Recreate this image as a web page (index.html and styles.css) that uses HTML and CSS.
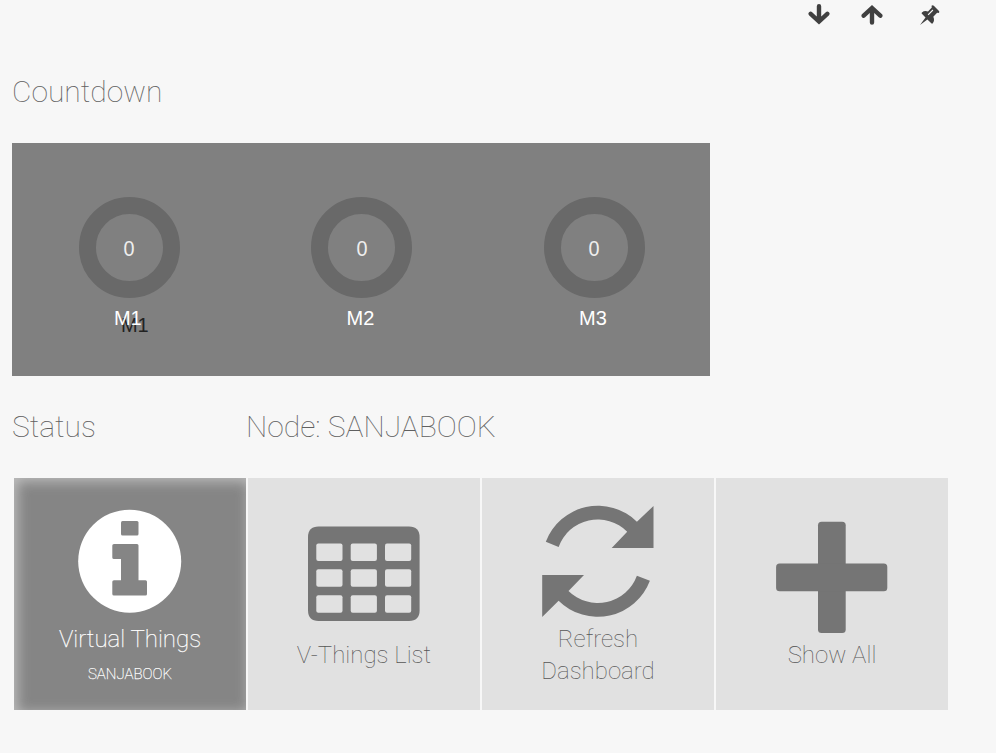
FILE: index.html
```html
<!DOCTYPE html>
<html lang="en">
<head>
<meta charset="utf-8">
<title>Dashboard</title>
<link rel="stylesheet" href="styles.css">
</head>
<body>
<nav class="toolbar">
  <svg class="tool" viewBox="0 0 22 22"><path d="M11 2.200V16M2.700 9.800L11 17.500l8.300-7.700"/></svg>
  <svg class="tool tool-up" viewBox="0 0 22 22"><path d="M11 18.600V5M2.700 11.700L11 4l8.300 7.700"/></svg>
  <svg class="tool tool-pin" viewBox="0 0 22 22"><path class="solid" fill-rule="evenodd" d="M12.500 1.800Q13.700 .7 14.800 1.800L20 7Q20.900 8.200 19.700 8.900L18.100 8.700L14.300 12.700Q16 16.300 13.800 19.300Q13 20 12.300 19.300L8.400 15.400L1 21L6.500 13.400L2.900 9.800Q2.200 9.100 2.900 8.400Q5.500 6.400 9 7.500L12.800 3.500ZM9.500 11.200L14.300 6.400L13.500 5.600L8.700 10.400Z"/></svg>
</nav>
<main>
  <h2 class="heading">Countdown</h2>
  <section class="timers">
    <div class="timer"><div class="ring"><span class="count">0</span></div><div class="name">M1<span class="ghost">M1</span></div></div>
    <div class="timer"><div class="ring"><span class="count">0</span></div><div class="name">M2</div></div>
    <div class="timer"><div class="ring"><span class="count">0</span></div><div class="name">M3</div></div>
  </section>
  <div class="headings">
    <h2 class="heading">Status</h2>
    <h2 class="heading">Node: SANJABOOK</h2>
  </div>
  <section class="tiles">
    <div class="tile active">
      <svg class="icon info" viewBox="78 509 104 104"><circle cx="129.700" cy="561.200" r="51.500"/><rect class="cut" x="121" y="521" width="17.500" height="14.500" rx="1.500"/><path class="cut" d="M114 544H137Q138.500 544 138.500 545.500V580.300H145.500Q147 580.300 147 581.800V594Q147 595.500 145.500 595.500H114Q112.300 595.500 112.300 594V581.800Q112.300 580.300 114 580.300H121V559H114Q112.300 559 112.300 557.500V545.500Q112.300 544 114 544Z"/></svg>
      <div class="label">Virtual Things</div>
      <div class="sub">SANJABOOK</div>
    </div>
    <div class="tile">
      <svg class="icon table" viewBox="308 526 112 95"><path d="M318.500 526.500H409Q419.600 526.500 419.600 537.200V610.300Q419.600 621 409 621H318.500Q308 621 308 610.300V537.200Q308 526.500 318.500 526.500Z"/>
        <g class="hole"><rect x="316.300" y="543.500" width="26.200" height="17.500" rx="2"/><rect x="350.700" y="543.500" width="26.200" height="17.500" rx="2"/><rect x="385" y="543.500" width="26.200" height="17.500" rx="2"/><rect x="316.300" y="569.300" width="26.200" height="17.500" rx="2"/><rect x="350.700" y="569.300" width="26.200" height="17.500" rx="2"/><rect x="385" y="569.300" width="26.200" height="17.500" rx="2"/><rect x="316.300" y="595.200" width="26.200" height="17.500" rx="2"/><rect x="350.700" y="595.200" width="26.200" height="17.500" rx="2"/><rect x="385" y="595.200" width="26.200" height="17.500" rx="2"/></g></svg>
      <div class="label">V-Things List</div>
    </div>
    <div class="tile">
      <svg class="icon refresh" viewBox="542 505 112 112"><path d="M545.800 541.700A55.700 55.700 0 0 1 636.900 521.700L653.500 506V547.900H611.700L627.200 531.700A41.600 41.600 0 0 0 558.600 547Z"/><path d="M649.900 580.800A55.700 55.700 0 0 1 558.600 600.700L542.200 616.900V575.100H584L568.500 590.900A41.600 41.600 0 0 0 636.900 575.700Z"/></svg>
      <div class="label">Refresh<br>Dashboard</div>
    </div>
    <div class="tile">
      <svg class="icon plus" viewBox="776 521 112 112"><rect x="818" y="521.700" width="27.700" height="111.200" rx="3.500"/><rect x="776.100" y="563.400" width="111.200" height="27.800" rx="3.500"/></svg>
      <div class="label">Show All</div>
    </div>
  </section>
</main>
</body>
</html>
```
FILE: styles.css
```css
* { box-sizing: border-box; }
body { margin: 0; height: 753px; overflow: hidden; background: #f7f7f7; font-family: Roboto, "Liberation Sans", sans-serif; }
.toolbar { height: 30px; padding: 4px 55px 0 0; display: flex; justify-content: flex-end; align-items: flex-start; }
.tool { width: 22px; height: 22px; fill: none; stroke: #404040; stroke-width: 4.4; stroke-linejoin: miter; stroke-linecap: round; }
.tool-up { margin-left: 31px; }
.tool-pin { margin-left: 36px; }
.solid { fill: #404040; stroke: none; }
main { padding-left: 12px; }
.heading { margin: 0; height: 40px; line-height: 40px; font-size: 30px; font-weight: 100; color: #606060; white-space: nowrap; }
main > .heading { margin-top: 42px; }
.timers { width: 698px; height: 233px; margin-top: 31px; padding-left: 1px; background: #808080; display: grid; grid-template-columns: repeat(3, 232.6px); }
.timer { padding-top: 54px; display: flex; flex-direction: column; align-items: center; font-family: "Liberation Sans", sans-serif; color: #fff; }
.ring { width: 101px; height: 101px; border: 17px solid #696969; border-radius: 50%; font-size: 22px; line-height: 69px; text-align: center; color: #eee; }
.count { display: inline-block; transform: scaleX(.9); }
.name { position: relative; z-index: 0; margin: 8px 3px 0 0; font-size: 20px; line-height: 24px; }
.ghost { position: absolute; left: 7px; top: 7px; color: #222; z-index: -1; }
.headings { display: grid; grid-template-columns: 234px auto; margin-top: 31px; }
.tiles { display: grid; grid-template-columns: repeat(4, 232px); gap: 2px; margin: 31px 0 0 2px; }
.tile { height: 232px; background: #e1e1e1; color: #555; display: flex; flex-direction: column; align-items: center; text-align: center; }
.icon { display: block; flex: none; fill: #757575; }
.label { font-size: 24px; line-height: 32px; font-weight: 100; }
.active { background: #858585; color: #fff; box-shadow: inset 3px 3px 13px #c0c0c0; -webkit-text-stroke: .25px #fff; }
.active .icon { fill: #fff; }
.active .cut { fill: #858585; }
.hole { fill: #e1e1e1; }
.info { width: 104px; height: 104px; margin: 31px 0 10px; }
.table { width: 112px; height: 95px; margin: 48px 0 18px; }
.refresh { width: 112px; height: 112px; margin: 27px 0 6px; }
.plus { width: 112px; height: 112px; margin: 43px 0 6px; }
.sub { margin-top: 8px; font-size: 15px; line-height: 22px; font-weight: 100; }
```
